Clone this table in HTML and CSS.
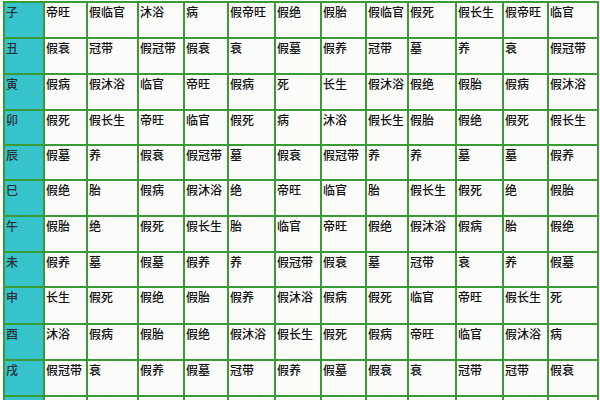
FILE: index.html
```html
<!DOCTYPE html>
<html lang="zh">
<head>
<meta charset="utf-8">
<link rel="stylesheet" href="styles.css">
</head>
<body>
<table class="grid">
<colgroup>
<col class="c0"><col class="c1"><col class="c2"><col class="c3"><col class="c4"><col class="c5"><col class="c6"><col class="c7"><col class="c8"><col class="c9"><col class="c10"><col class="c11"><col class="c12">
</colgroup>
<tbody>
<tr><th>子</th><td>帝旺</td><td>假临官</td><td>沐浴</td><td>病</td><td>假帝旺</td><td>假绝</td><td>假胎</td><td>假临官</td><td>假死</td><td>假长生</td><td>假帝旺</td><td>临官</td></tr>
<tr><th>丑</th><td>假衰</td><td>冠带</td><td>假冠带</td><td>假衰</td><td>衰</td><td>假墓</td><td>假养</td><td>冠带</td><td>墓</td><td>养</td><td>衰</td><td>假冠带</td></tr>
<tr><th>寅</th><td>假病</td><td>假沐浴</td><td>临官</td><td>帝旺</td><td>假病</td><td>死</td><td>长生</td><td>假沐浴</td><td>假绝</td><td>假胎</td><td>假病</td><td>假沐浴</td></tr>
<tr class="short"><th>卯</th><td>假死</td><td>假长生</td><td>帝旺</td><td>临官</td><td>假死</td><td>病</td><td>沐浴</td><td>假长生</td><td>假胎</td><td>假绝</td><td>假死</td><td>假长生</td></tr>
<tr class="short"><th>辰</th><td>假墓</td><td>养</td><td>假衰</td><td>假冠带</td><td>墓</td><td>假衰</td><td>假冠带</td><td>养</td><td>养</td><td>墓</td><td>墓</td><td>假养</td></tr>
<tr><th>巳</th><td>假绝</td><td>胎</td><td>假病</td><td>假沐浴</td><td>绝</td><td>帝旺</td><td>临官</td><td>胎</td><td>假长生</td><td>假死</td><td>绝</td><td>假胎</td></tr>
<tr><th>午</th><td>假胎</td><td>绝</td><td>假死</td><td>假长生</td><td>胎</td><td>临官</td><td>帝旺</td><td>假绝</td><td>假沐浴</td><td>假病</td><td>胎</td><td>假绝</td></tr>
<tr class="short"><th>未</th><td>假养</td><td>墓</td><td>假墓</td><td>假养</td><td>养</td><td>假冠带</td><td>假衰</td><td>墓</td><td>冠带</td><td>衰</td><td>养</td><td>假墓</td></tr>
<tr class="tall"><th>申</th><td>长生</td><td>假死</td><td>假绝</td><td>假胎</td><td>假养</td><td>假沐浴</td><td>假病</td><td>假死</td><td>临官</td><td>帝旺</td><td>假长生</td><td>死</td></tr>
<tr><th>酉</th><td>沐浴</td><td>假病</td><td>假胎</td><td>假绝</td><td>假沐浴</td><td>假长生</td><td>假死</td><td>假病</td><td>帝旺</td><td>临官</td><td>假沐浴</td><td>病</td></tr>
<tr><th>戌</th><td>假冠带</td><td>衰</td><td>假养</td><td>假墓</td><td>冠带</td><td>假养</td><td>假墓</td><td>假衰</td><td>衰</td><td>冠带</td><td>冠带</td><td>假衰</td></tr>
<tr><th>亥</th><td>临官</td><td>假帝旺</td><td>长生</td><td>死</td><td>假临官</td><td>假胎</td><td>假绝</td><td>假帝旺</td><td>病</td><td>假沐浴</td><td>假临官</td><td>帝旺</td></tr>
</tbody>
</table>
</body>
</html>
```
FILE: styles.css
```css
html, body {
  margin: 0;
  padding: 0;
  background: #ffffff;
  overflow: hidden;
}
body {
  padding: 1px 0 0 3px;
}
.grid {
  table-layout: fixed;
  border-collapse: separate;
  border-spacing: 2px;
  background: #3a9a36;
  width: 596px;
  font-family: "Noto Sans CJK SC", "Noto Sans", sans-serif;
  font-size: 12px;
  line-height: 14px;
  color: #111111;
}
.c0 { width: 38px; }
.c1 { width: 41px; }
.c2 { width: 49px; }
.c3 { width: 44px; }
.c4 { width: 42px; }
.c5 { width: 45px; }
.c6 { width: 44px; }
.c7 { width: 43px; }
.c8 { width: 40px; }
.c9 { width: 46px; }
.c10 { width: 45px; }
.c11 { width: 43px; }
.c12 { width: 48px; }
.grid th,
.grid td {
  height: 34px;
  padding: 2px 0 0 1px;
  box-sizing: border-box;
  vertical-align: top;
  text-align: left;
  white-space: nowrap;
  overflow: hidden;
  font-weight: 500;
  background: #fcfdfb;
}
.grid .short th,
.grid .short td {
  height: 33px;
}
.grid .tall th,
.grid .tall td {
  height: 35px;
}
.grid th {
  background: #36c3cb;
  color: #2a2f3a;
}
```
